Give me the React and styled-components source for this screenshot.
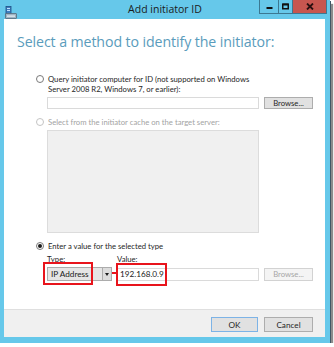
import React from "react";
import styled, { createGlobalStyle } from "styled-components";

const Global = createGlobalStyle`
  html, body {
    margin: 0;
    padding: 0;
    background: #ffffff;
    overflow: hidden;
  }
  body {
    font-family: Lato, "Open Sans", sans-serif;
  }
`;

const Window = styled.div`
  width: 330px;
  height: 343px;
  background: #66c8ea;
  display: flex;
  flex-direction: column;
  box-shadow: 1px 1px 0 #3e5866, 3px 4px 1px rgba(0, 0, 0, 0.45);
`;

const TitleBar = styled.div`
  height: 19px;
  display: grid;
  grid-template-columns: 1fr auto 1fr;
  align-items: start;
`;

const AppIcon = styled.div`
  padding: 3px 0 0 5px;
  height: 13px;
`;

const Title = styled.div`
  font-family: "Open Sans", sans-serif;
  font-size: 10.5px;
  line-height: 19px;
  color: #1b1b1b;
`;

const Caption = styled.div`
  justify-self: end;
  display: flex;
  margin-right: 3px;
  border: 1px solid #3b7892;
  border-top: none;
  height: 13px;
`;

const CapButton = styled.div`
  width: ${(p) => p.$w}px;
  display: flex;
  align-items: center;
  justify-content: center;
  background: ${(p) => (p.$close ? "#c7564f" : "#66c8ea")};
  border-left: ${(p) => (p.$first ? "none" : "1px solid #3b7892")};
`;

const Client = styled.div`
  flex: 1;
  margin: 0 5px 6px 4px;
  background: #ffffff;
  display: flex;
  flex-direction: column;
`;

const Body = styled.div`
  flex: 1;
`;

const Heading = styled.h1`
  margin: 14px 0 0 13px;
  font-family: "Open Sans", sans-serif;
  font-size: 14.2px;
  line-height: 18px;
  font-weight: 400;
  color: #5a9cbc;
  letter-spacing: -0.1px;
`;

const Options = styled.div`
  padding-left: 32px;
  margin-top: 23px;
  font-size: 7.7px;
  line-height: 10px;
  color: #262626;
`;

const RadioRow = styled.div`
  display: flex;
  align-items: flex-start;
  gap: 4px;
  margin-top: ${(p) => p.$top || 0}px;
  color: ${(p) => (p.$disabled ? "#a3a3a3" : "#262626")};
`;

const Radio = styled.span`
  flex: none;
  width: 6px;
  height: 6px;
  margin-top: 1px;
  border-radius: 50%;
  border: 1px solid ${(p) => (p.$disabled ? "#c4c4c4" : "#7a7a7a")};
  background: #ffffff;
  display: flex;
  align-items: center;
  justify-content: center;
  &::after {
    content: "";
    width: 4px;
    height: 4px;
    border-radius: 50%;
    background: ${(p) => (p.$checked ? "#1a1a1a" : "transparent")};
  }
`;

const Indent = styled.div`
  margin-left: 11px;
  margin-top: ${(p) => p.$top || 0}px;
`;

const FieldRow = styled.div`
  display: flex;
  align-items: center;
  gap: 5px;
`;

const TextBox = styled.div`
  box-sizing: border-box;
  width: ${(p) => p.$w}px;
  height: ${(p) => p.$h || 12}px;
  border: 1px solid #dadada;
  background: #ffffff;
  font-size: 8.2px;
  line-height: ${(p) => (p.$h || 12) - 2}px;
  padding-left: 2px;
  color: #1a1a1a;
`;

const Button = styled.div`
  box-sizing: border-box;
  width: ${(p) => p.$w}px;
  height: ${(p) => p.$h}px;
  border: 1px solid ${(p) => (p.$default ? "#7db3e6" : p.$disabled ? "#d2d2d2" : "#adadad")};
  background: ${(p) => (p.$disabled ? "#f4f4f4" : "#e1e1e1")};
  color: ${(p) => (p.$disabled ? "#a6a6a6" : "#262626")};
  font-size: ${(p) => p.$size || 7.7}px;
  display: flex;
  align-items: center;
  justify-content: center;
`;

const ListBox = styled.div`
  box-sizing: border-box;
  width: 212px;
  height: 103px;
  margin-top: 3px;
  background: #f0f0f0;
  border: 1px solid #dcdcdc;
`;

const TypeGrid = styled.div`
  display: grid;
  grid-template-columns: 65px 142px 49px;
  column-gap: 5px;
  row-gap: 3px;
  margin-top: 3px;
  align-items: center;
`;

const FieldLabel = styled.div`
  line-height: 10px;
  color: #262626;
`;

const Anchor = styled.div`
  position: relative;
`;

const Combo = styled.div`
  box-sizing: border-box;
  height: 14px;
  display: flex;
  border: 1px solid #acacac;
  background: #e5e5e5;
`;

const ComboText = styled.div`
  flex: 1;
  font-size: 8.2px;
  line-height: 12px;
  padding-left: 3px;
  color: #1a1a1a;
`;

const ComboArrow = styled.div`
  width: 8px;
  border-left: 1px solid #acacac;
  background: #dcdcdc;
  display: flex;
  align-items: center;
  justify-content: center;
  &::after {
    content: "";
    border-left: 2.5px solid transparent;
    border-right: 2.5px solid transparent;
    border-top: 3px solid #1a1a1a;
  }
`;

const Callout = styled.div`
  position: absolute;
  left: ${(p) => p.$left}px;
  top: -5px;
  width: ${(p) => p.$w}px;
  height: 23px;
  box-sizing: border-box;
  border: 2px solid #e8141c;
  pointer-events: none;
`;

const Connector = styled.div`
  position: absolute;
  left: 65px;
  top: 5px;
  width: 5px;
  height: 2px;
  background: #e8141c;
`;

const Footer = styled.div`
  height: 28px;
  box-sizing: border-box;
  border-top: 1px solid #dfdfdf;
  background: #f0f0f0;
  display: flex;
  justify-content: flex-end;
  align-items: flex-start;
  gap: 6px;
  padding: 7px 12px 0 0;
`;

const ServerIcon = () => (
  <svg width="12" height="13" viewBox="0 0 12 13">
    <rect x="1" y="0.5" width="5" height="8" fill="#3f7fbf" stroke="#1f4f86" strokeWidth="0.8" />
    <rect x="2" y="2" width="3" height="1" fill="#bfe0ff" />
    <rect x="2" y="4" width="3" height="1" fill="#bfe0ff" />
    <rect x="0.5" y="7.5" width="11" height="5" rx="0.5" fill="#9fb4c4" stroke="#55697a" strokeWidth="0.8" />
    <rect x="2" y="9.5" width="8" height="1.2" fill="#e9f0f5" />
  </svg>
);

const MinGlyph = () => (
  <svg width="7" height="7" viewBox="0 0 7 7">
    <rect x="0.5" y="4" width="6" height="2" fill="#111" />
  </svg>
);

const MaxGlyph = () => (
  <svg width="7" height="7" viewBox="0 0 7 7">
    <rect x="0.75" y="1.25" width="5.5" height="4.5" fill="none" stroke="#111" strokeWidth="1.5" />
    <rect x="0.5" y="0.5" width="6" height="2" fill="#111" />
  </svg>
);

const CloseGlyph = () => (
  <svg width="8" height="7" viewBox="0 0 8 7">
    <path d="M1 0.5 L7 6.5 M7 0.5 L1 6.5" stroke="#2a1010" strokeWidth="1.8" />
  </svg>
);

export default function App() {
  return (
    <>
      <Global />
      <Window>
        <TitleBar>
          <AppIcon>
            <ServerIcon />
          </AppIcon>
          <Title>Add initiator ID</Title>
          <Caption>
            <CapButton $w={18} $first>
              <MinGlyph />
            </CapButton>
            <CapButton $w={13}>
              <MaxGlyph />
            </CapButton>
            <CapButton $w={33} $close>
              <CloseGlyph />
            </CapButton>
          </Caption>
        </TitleBar>
        <Client>
          <Body>
            <Heading>Select a method to identify the initiator:</Heading>
            <Options>
              <RadioRow>
                <Radio />
                <span>
                  Query initiator computer for ID (not supported on Windows
                  <br />
                  Server 2008 R2, Windows 7, or earlier):
                </span>
              </RadioRow>
              <Indent $top={3}>
                <FieldRow>
                  <TextBox $w={212} $h={12} />
                  <Button $w={49} $h={12}>Browse...</Button>
                </FieldRow>
              </Indent>
              <RadioRow $top={8} $disabled>
                <Radio $disabled />
                <span>Select from the initiator cache on the target server:</span>
              </RadioRow>
              <Indent>
                <ListBox />
              </Indent>
              <RadioRow $top={8}>
                <Radio $checked />
                <span>Enter a value for the selected type</span>
              </RadioRow>
              <Indent>
                <TypeGrid>
                  <FieldLabel>Type:</FieldLabel>
                  <FieldLabel>Value:</FieldLabel>
                  <span />
                  <Anchor>
                    <Combo>
                      <ComboText>IP Address</ComboText>
                      <ComboArrow />
                    </Combo>
                    <Callout $left={-4} $w={50} />
                    <Connector />
                  </Anchor>
                  <Anchor>
                    <TextBox $w={142} $h={13}>192.168.0.9</TextBox>
                    <Callout $left={-1} $w={51} />
                  </Anchor>
                  <Button $w={49} $h={13} $disabled>Browse...</Button>
                </TypeGrid>
              </Indent>
            </Options>
          </Body>
          <Footer>
            <Button $w={47} $h={15} $size={8.2} $default>OK</Button>
            <Button $w={49} $h={15} $size={8.2}>Cancel</Button>
          </Footer>
        </Client>
      </Window>
    </>
  );
}
